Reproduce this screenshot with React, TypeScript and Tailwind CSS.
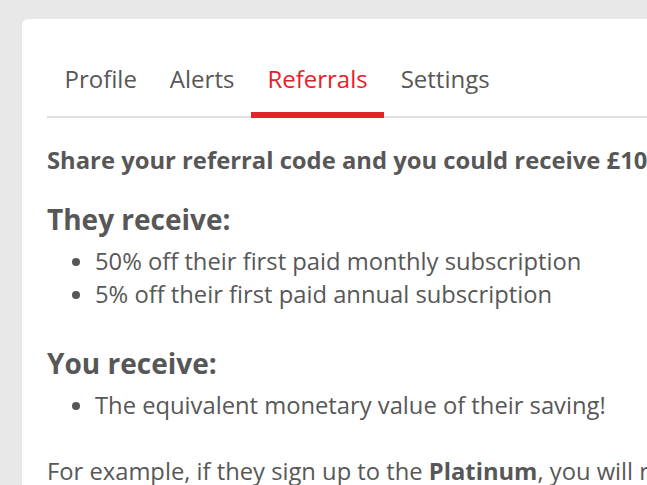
export default function App() {
  const tabs = ["Profile", "Alerts", "Referrals", "Settings"];
  return (
    <div className="w-[647px] h-[485px] overflow-hidden bg-[#e8e8e8] pt-[19px] pl-[22px] font-['Open_Sans',sans-serif] text-[#575757]">
      <div className="w-[720px] h-[520px] bg-white rounded-tl-md pl-[25px] pt-[45px]">
        <div className="flex pl-px border-b-2 border-[#e0e0e0]">
          {tabs.map((t) => (
            <div
              key={t}
              className={
                t === "Referrals"
                  ? "px-[16.5px] pb-[18px] text-[24px] leading-[30px] text-[#e4222a] border-b-[6px] border-[#e4222a] -mb-[2px]"
                  : "px-[16.5px] pb-[18px] text-[24px] leading-[30px]"
              }
            >
              {t}
            </div>
          ))}
        </div>
        <p className="mt-[26px] text-[23.8px] font-bold whitespace-nowrap leading-[32px]">
          Share your referral code and you could receive £10 credit
        </p>
        <h2 className="mt-[23px] text-[28px] font-bold leading-[40px]">They receive:</h2>
        <ul className="mt-[6px] pl-[48px] list-disc text-[23.75px] leading-[33px] whitespace-nowrap">
          <li>50% off their first paid monthly subscription</li>
          <li>5% off their first paid annual subscription</li>
        </ul>
        <h2 className="mt-[32px] text-[28px] font-bold leading-[40px]">You receive:</h2>
        <ul className="mt-[6px] pl-[48px] list-disc text-[23.75px] leading-[33px] whitespace-nowrap">
          <li>The equivalent monetary value of their saving!</li>
        </ul>
        <p className="mt-[33px] text-[23.75px] leading-[33px] whitespace-nowrap">
          For example, if they sign up to the <b>Platinum</b>, you will receive
        </p>
      </div>
    </div>
  );
}
